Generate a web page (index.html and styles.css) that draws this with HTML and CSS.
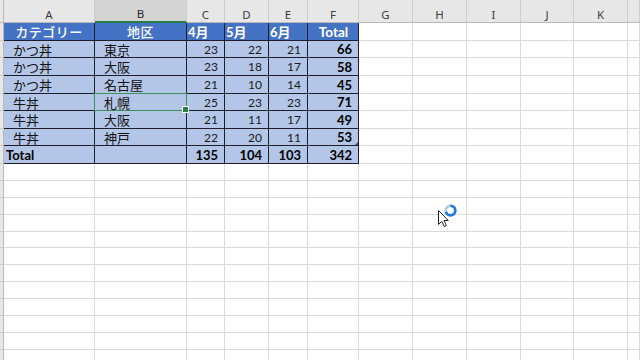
FILE: index.html
```html
<!DOCTYPE html>
<html lang="ja">
<head>
<meta charset="utf-8">
<title>Sheet</title>
<link rel="stylesheet" href="styles.css">
</head>
<body>
<div class="sheet">
  <!-- column headers -->
  <div class="ch corner"></div>
  <div class="ch">A</div>
  <div class="ch sel">B</div>
  <div class="ch">C</div>
  <div class="ch">D</div>
  <div class="ch">E</div>
  <div class="ch">F</div>
  <div class="ch">G</div>
  <div class="ch">H</div>
  <div class="ch">I</div>
  <div class="ch">J</div>
  <div class="ch">K</div>
  <div class="ch"></div>

  <!-- row 1: table header -->
  <div class="rh"></div>
  <div class="t hd center">カテゴリー</div>
  <div class="t hd center">地区</div>
  <div class="t hd left">4月</div>
  <div class="t hd left">5月</div>
  <div class="t hd left">6月</div>
  <div class="t hd center tl">Total</div>
  <div class="c"></div><div class="c"></div><div class="c"></div><div class="c"></div><div class="c"></div><div class="c"></div>

  <!-- row 2 -->
  <div class="rh"></div>
  <div class="t tx">かつ丼</div>
  <div class="t tx">東京</div>
  <div class="t num">23</div>
  <div class="t num">22</div>
  <div class="t num">21</div>
  <div class="t num bold">66</div>
  <div class="c"></div><div class="c"></div><div class="c"></div><div class="c"></div><div class="c"></div><div class="c"></div>

  <!-- row 3 -->
  <div class="rh"></div>
  <div class="t tx">かつ丼</div>
  <div class="t tx">大阪</div>
  <div class="t num">23</div>
  <div class="t num">18</div>
  <div class="t num">17</div>
  <div class="t num bold">58</div>
  <div class="c"></div><div class="c"></div><div class="c"></div><div class="c"></div><div class="c"></div><div class="c"></div>

  <!-- row 4 -->
  <div class="rh"></div>
  <div class="t tx">かつ丼</div>
  <div class="t tx">名古屋</div>
  <div class="t num">21</div>
  <div class="t num">10</div>
  <div class="t num">14</div>
  <div class="t num bold">45</div>
  <div class="c"></div><div class="c"></div><div class="c"></div><div class="c"></div><div class="c"></div><div class="c"></div>

  <!-- row 5 -->
  <div class="rh"></div>
  <div class="t tx">牛丼</div>
  <div class="t tx active">札幌</div>
  <div class="t num">25</div>
  <div class="t num">23</div>
  <div class="t num">23</div>
  <div class="t num bold">71</div>
  <div class="c"></div><div class="c"></div><div class="c"></div><div class="c"></div><div class="c"></div><div class="c"></div>

  <!-- row 6 -->
  <div class="rh"></div>
  <div class="t tx">牛丼</div>
  <div class="t tx">大阪</div>
  <div class="t num">21</div>
  <div class="t num">11</div>
  <div class="t num">17</div>
  <div class="t num bold">49</div>
  <div class="c"></div><div class="c"></div><div class="c"></div><div class="c"></div><div class="c"></div><div class="c"></div>

  <!-- row 7 -->
  <div class="rh"></div>
  <div class="t tx">牛丼</div>
  <div class="t tx">神戸</div>
  <div class="t num">22</div>
  <div class="t num">20</div>
  <div class="t num">11</div>
  <div class="t num bold handle">53</div>
  <div class="c"></div><div class="c"></div><div class="c"></div><div class="c"></div><div class="c"></div><div class="c"></div>

  <!-- row 8: total -->
  <div class="rh"></div>
  <div class="t tot totlabel">Total</div>
  <div class="t tot"></div>
  <div class="t tot num bold">135</div>
  <div class="t tot num bold">104</div>
  <div class="t tot num bold">103</div>
  <div class="t tot num bold">342</div>
  <div class="c"></div><div class="c"></div><div class="c"></div><div class="c"></div><div class="c"></div><div class="c"></div>

  <!-- empty rows 9-20 -->
  <div class="rh"></div><div class="c"></div><div class="c"></div><div class="c"></div><div class="c"></div><div class="c"></div><div class="c"></div><div class="c"></div><div class="c"></div><div class="c"></div><div class="c"></div><div class="c"></div><div class="c"></div>
  <div class="rh"></div><div class="c"></div><div class="c"></div><div class="c"></div><div class="c"></div><div class="c"></div><div class="c"></div><div class="c"></div><div class="c"></div><div class="c"></div><div class="c"></div><div class="c"></div><div class="c"></div>
  <div class="rh"></div><div class="c"></div><div class="c"></div><div class="c"></div><div class="c"></div><div class="c"></div><div class="c"></div><div class="c"></div><div class="c"></div><div class="c"></div><div class="c"></div><div class="c"></div><div class="c"></div>
  <div class="rh"></div><div class="c"></div><div class="c"></div><div class="c"></div><div class="c"></div><div class="c"></div><div class="c"></div><div class="c"></div><div class="c"></div><div class="c"></div><div class="c"></div><div class="c"></div><div class="c"></div>
  <div class="rh"></div><div class="c"></div><div class="c"></div><div class="c"></div><div class="c"></div><div class="c"></div><div class="c"></div><div class="c"></div><div class="c"></div><div class="c"></div><div class="c"></div><div class="c"></div><div class="c"></div>
  <div class="rh"></div><div class="c"></div><div class="c"></div><div class="c"></div><div class="c"></div><div class="c"></div><div class="c"></div><div class="c"></div><div class="c"></div><div class="c"></div><div class="c"></div><div class="c"></div><div class="c"></div>
  <div class="rh"></div><div class="c"></div><div class="c"></div><div class="c"></div><div class="c"></div><div class="c"></div><div class="c"></div><div class="c"></div><div class="c"></div><div class="c"></div><div class="c"></div><div class="c"></div><div class="c"></div>
  <div class="rh"></div><div class="c"></div><div class="c"></div><div class="c"></div><div class="c"></div><div class="c"></div><div class="c"></div><div class="c"></div><div class="c"></div><div class="c"></div><div class="c"></div><div class="c"></div><div class="c"></div>
  <div class="rh"></div><div class="c"></div><div class="c"></div><div class="c"></div><div class="c"></div><div class="c"></div><div class="c"></div><div class="c"></div><div class="c"></div><div class="c"></div><div class="c"></div><div class="c"></div><div class="c"></div>
  <div class="rh"></div><div class="c"></div><div class="c"></div><div class="c"></div><div class="c"></div><div class="c"></div><div class="c"></div><div class="c"></div><div class="c"></div><div class="c"></div><div class="c"></div><div class="c"></div><div class="c"></div>
  <div class="rh"></div><div class="c"></div><div class="c"></div><div class="c"></div><div class="c"></div><div class="c"></div><div class="c"></div><div class="c"></div><div class="c"></div><div class="c"></div><div class="c"></div><div class="c"></div><div class="c"></div>
  <div class="rh"></div><div class="c"></div><div class="c"></div><div class="c"></div><div class="c"></div><div class="c"></div><div class="c"></div><div class="c"></div><div class="c"></div><div class="c"></div><div class="c"></div><div class="c"></div><div class="c"></div>

  <!-- mouse pointer with busy ring -->
  <svg class="cursor" width="24" height="24" viewBox="0 0 24 24">
    <path d="M1.5 1.5 L1.5 15.5 L4.8 12.4 L7.2 17.6 L9.4 16.6 L7 11.5 L11.3 11.5 Z" fill="#ffffff" stroke="#222222" stroke-width="1" stroke-linejoin="round"/>
    <circle cx="13.5" cy="1.5" r="4.8" fill="none" stroke="#a9cbee" stroke-width="2.6"/>
    <path d="M13.5 -3.3 A4.8 4.8 0 1 1 8.9 2.9" fill="none" stroke="#1e78d6" stroke-width="2.6"/>
  </svg>
</div>
</body>
</html>
```

FILE: styles.css
```css
* {
  box-sizing: border-box;
}

html, body {
  margin: 0;
  padding: 0;
  background: #ffffff;
  overflow: hidden;
}

.sheet {
  position: relative;
  width: 640px;
  height: 360px;
  overflow: hidden;
  display: grid;
  grid-template-columns: 4px 91px 92px 38px 44px 39px 51px 54px 54px 54px 53px 54px 12px;
  grid-template-rows: 23px 18px 17px 18px 18px 17px 18px 17px 18px 17px 17px 17px 17px 16px 17px 17px 17px 17px 17px 17px 17px;
  font-family: Lato, "Noto Sans CJK JP", sans-serif;
}

/* column headers */
.ch {
  background: #e7e7e7;
  border-right: 1px solid #cdcdcd;
  border-bottom: 1px solid #b9b9b9;
  font-family: "Noto Sans", "Liberation Sans", sans-serif;
  font-size: 11.5px;
  color: #3c3c3c;
  display: flex;
  align-items: center;
  justify-content: center;
  padding-top: 6px;
}

.ch.corner {
  border-right: 1px solid #b9b9b9;
}

.ch.sel {
  background: #d4d4d4;
  border-bottom: 2px solid #2a7d46;
  color: #262626;
}

/* row header strip */
.rh {
  background: #e7e7e7;
  border-right: 1px solid #b9b9b9;
  border-bottom: 1px solid #cdcdcd;
}

/* blank cells */
.c {
  border-right: 1px solid #dadada;
  border-bottom: 1px solid #dadada;
}

/* table cells */
.t {
  position: relative;
  background: #b4c6e7;
  border-right: 1px solid #1c1f2a;
  border-bottom: 1px solid #1c1f2a;
  display: flex;
  align-items: center;
  white-space: nowrap;
  color: #000000;
  font-size: 12px;
}

.t.hd {
  background: #4472c4;
  color: #ffffff;
  font-weight: 700;
  font-size: 13px;
}

.t.hd.center {
  justify-content: center;
  font-family: "Noto Sans CJK JP", sans-serif;
  font-size: 13px;
  font-weight: 500;
  letter-spacing: 0.5px;
}

.t.hd.tl {
  font-family: Lato, sans-serif;
  font-size: 13.5px;
  font-weight: 700;
  letter-spacing: 0;
  padding-left: 1px;
}

.t.hd.left {
  justify-content: flex-start;
  padding-left: 1px;
  font-family: Lato, "Noto Sans CJK JP", sans-serif;
}

.t.tx {
  font-family: "Noto Sans CJK JP", sans-serif;
  font-size: 13px;
  padding-left: 9px;
  color: #111111;
}

.t.num {
  justify-content: flex-end;
  padding-right: 6px;
  color: #1a1a1a;
}

.t.bold {
  font-weight: 700;
  color: #000000;
  font-size: 13px;
}

.t.tot {
  border-top: 1px solid #1c1f2a;
  margin-top: -1px;
  height: calc(100% + 1px);
}

.t.totlabel {
  font-weight: 700;
  font-size: 13px;
  padding-left: 2px;
}

/* active cell selection */
.t.active::after {
  content: "";
  position: absolute;
  left: -1px;
  top: -1px;
  right: -1px;
  bottom: -1px;
  border: 1.5px solid #3f8f5a;
}

.t.active::before {
  content: "";
  position: absolute;
  right: -3px;
  bottom: -3px;
  width: 5px;
  height: 5px;
  background: #2a7d46;
  border: 1px solid #ffffff;
  z-index: 2;
}

/* table resize handle */
.t.handle::after {
  content: "";
  position: absolute;
  right: 0;
  bottom: 0;
  width: 0;
  height: 0;
  border-left: 3px solid transparent;
  border-bottom: 3px solid #2f4f8f;
}

.cursor {
  position: absolute;
  left: 437px;
  top: 209px;
  overflow: visible;
}
```
